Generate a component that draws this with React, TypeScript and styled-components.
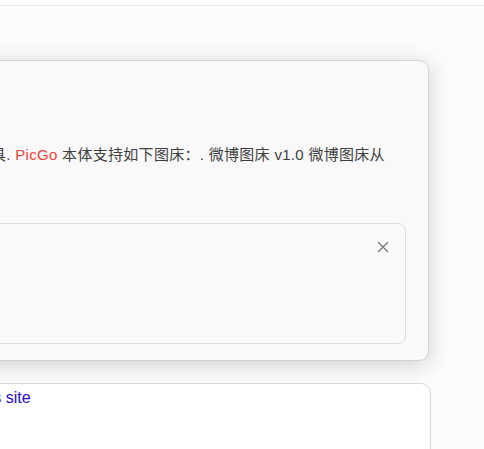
import React from "react";
import styled, { createGlobalStyle } from "styled-components";

const Global = createGlobalStyle`
  html, body { margin: 0; padding: 0; }
  body {
    background: #fcfcfc;
    font-family: "Liberation Sans", "Noto Sans CJK SC", sans-serif;
    overflow: hidden;
  }
`;

const TopBar = styled.div`
  height: 5px;
  background: #ffffff;
  border-bottom: 1px solid #e6e6e6;
`;

const Main = styled.main`
  padding-top: 54px;
  display: flex;
  flex-direction: column;
  gap: 22px;
  margin-left: -200px;
  width: 631px;
`;

const Dialog = styled.section`
  box-sizing: border-box;
  width: 629px;
  height: 301px;
  background: #f9f9f9;
  border: 1px solid #d4d4d4;
  border-radius: 10px;
  box-shadow: 0 4px 24px rgba(0, 0, 0, 0.18);
  padding: 84px 22px 16px 190px;
  display: flex;
  flex-direction: column;
`;

const Desc = styled.p`
  margin: 0;
  font-size: 15px;
  letter-spacing: 0.3px;
  line-height: 20px;
  color: #3f3f3f;
  white-space: nowrap;
`;

const Brand = styled.span`
  color: #e8453c;
`;

const InnerBox = styled.div`
  margin-top: 58px;
  margin-left: -190px;
  box-sizing: border-box;
  height: 122px;
  border: 1px solid #dcdde2;
  border-radius: 8px;
  background: #fafafa;
  display: flex;
  justify-content: flex-end;
  padding: 17px 16px 0 0;
`;

const Close = styled.button`
  width: 12px;
  height: 12px;
  padding: 0;
  border: none;
  background: transparent;
  display: flex;
  align-items: center;
  justify-content: center;
  cursor: pointer;
`;

const Card = styled.section`
  box-sizing: border-box;
  width: 631px;
  height: 120px;
  background: #ffffff;
  border: 1px solid #d8d8d8;
  border-radius: 10px;
  padding: 4px 0 0 141px;
`;

const Link = styled.a`
  font-size: 16px;
  line-height: 20px;
  color: #2a0bc8;
  text-decoration: none;
  white-space: nowrap;
`;

export default function App() {
  return (
    <>
      <Global />
      <TopBar />
      <Main>
        <Dialog>
          <Desc>
            具. <Brand>PicGo</Brand> 本体支持如下图床：. 微博图床 v1.0 微博图床从
          </Desc>
          <InnerBox>
            <Close aria-label="close">
              <svg width="12" height="12" viewBox="0 0 12 12">
                <path d="M1 1 L11 11 M11 1 L1 11" stroke="#7a7a7a" strokeWidth="1.4" fill="none" />
              </svg>
            </Close>
          </InnerBox>
        </Dialog>
        <Card>
          <Link href="#">Visit this site</Link>
        </Card>
      </Main>
    </>
  );
}
